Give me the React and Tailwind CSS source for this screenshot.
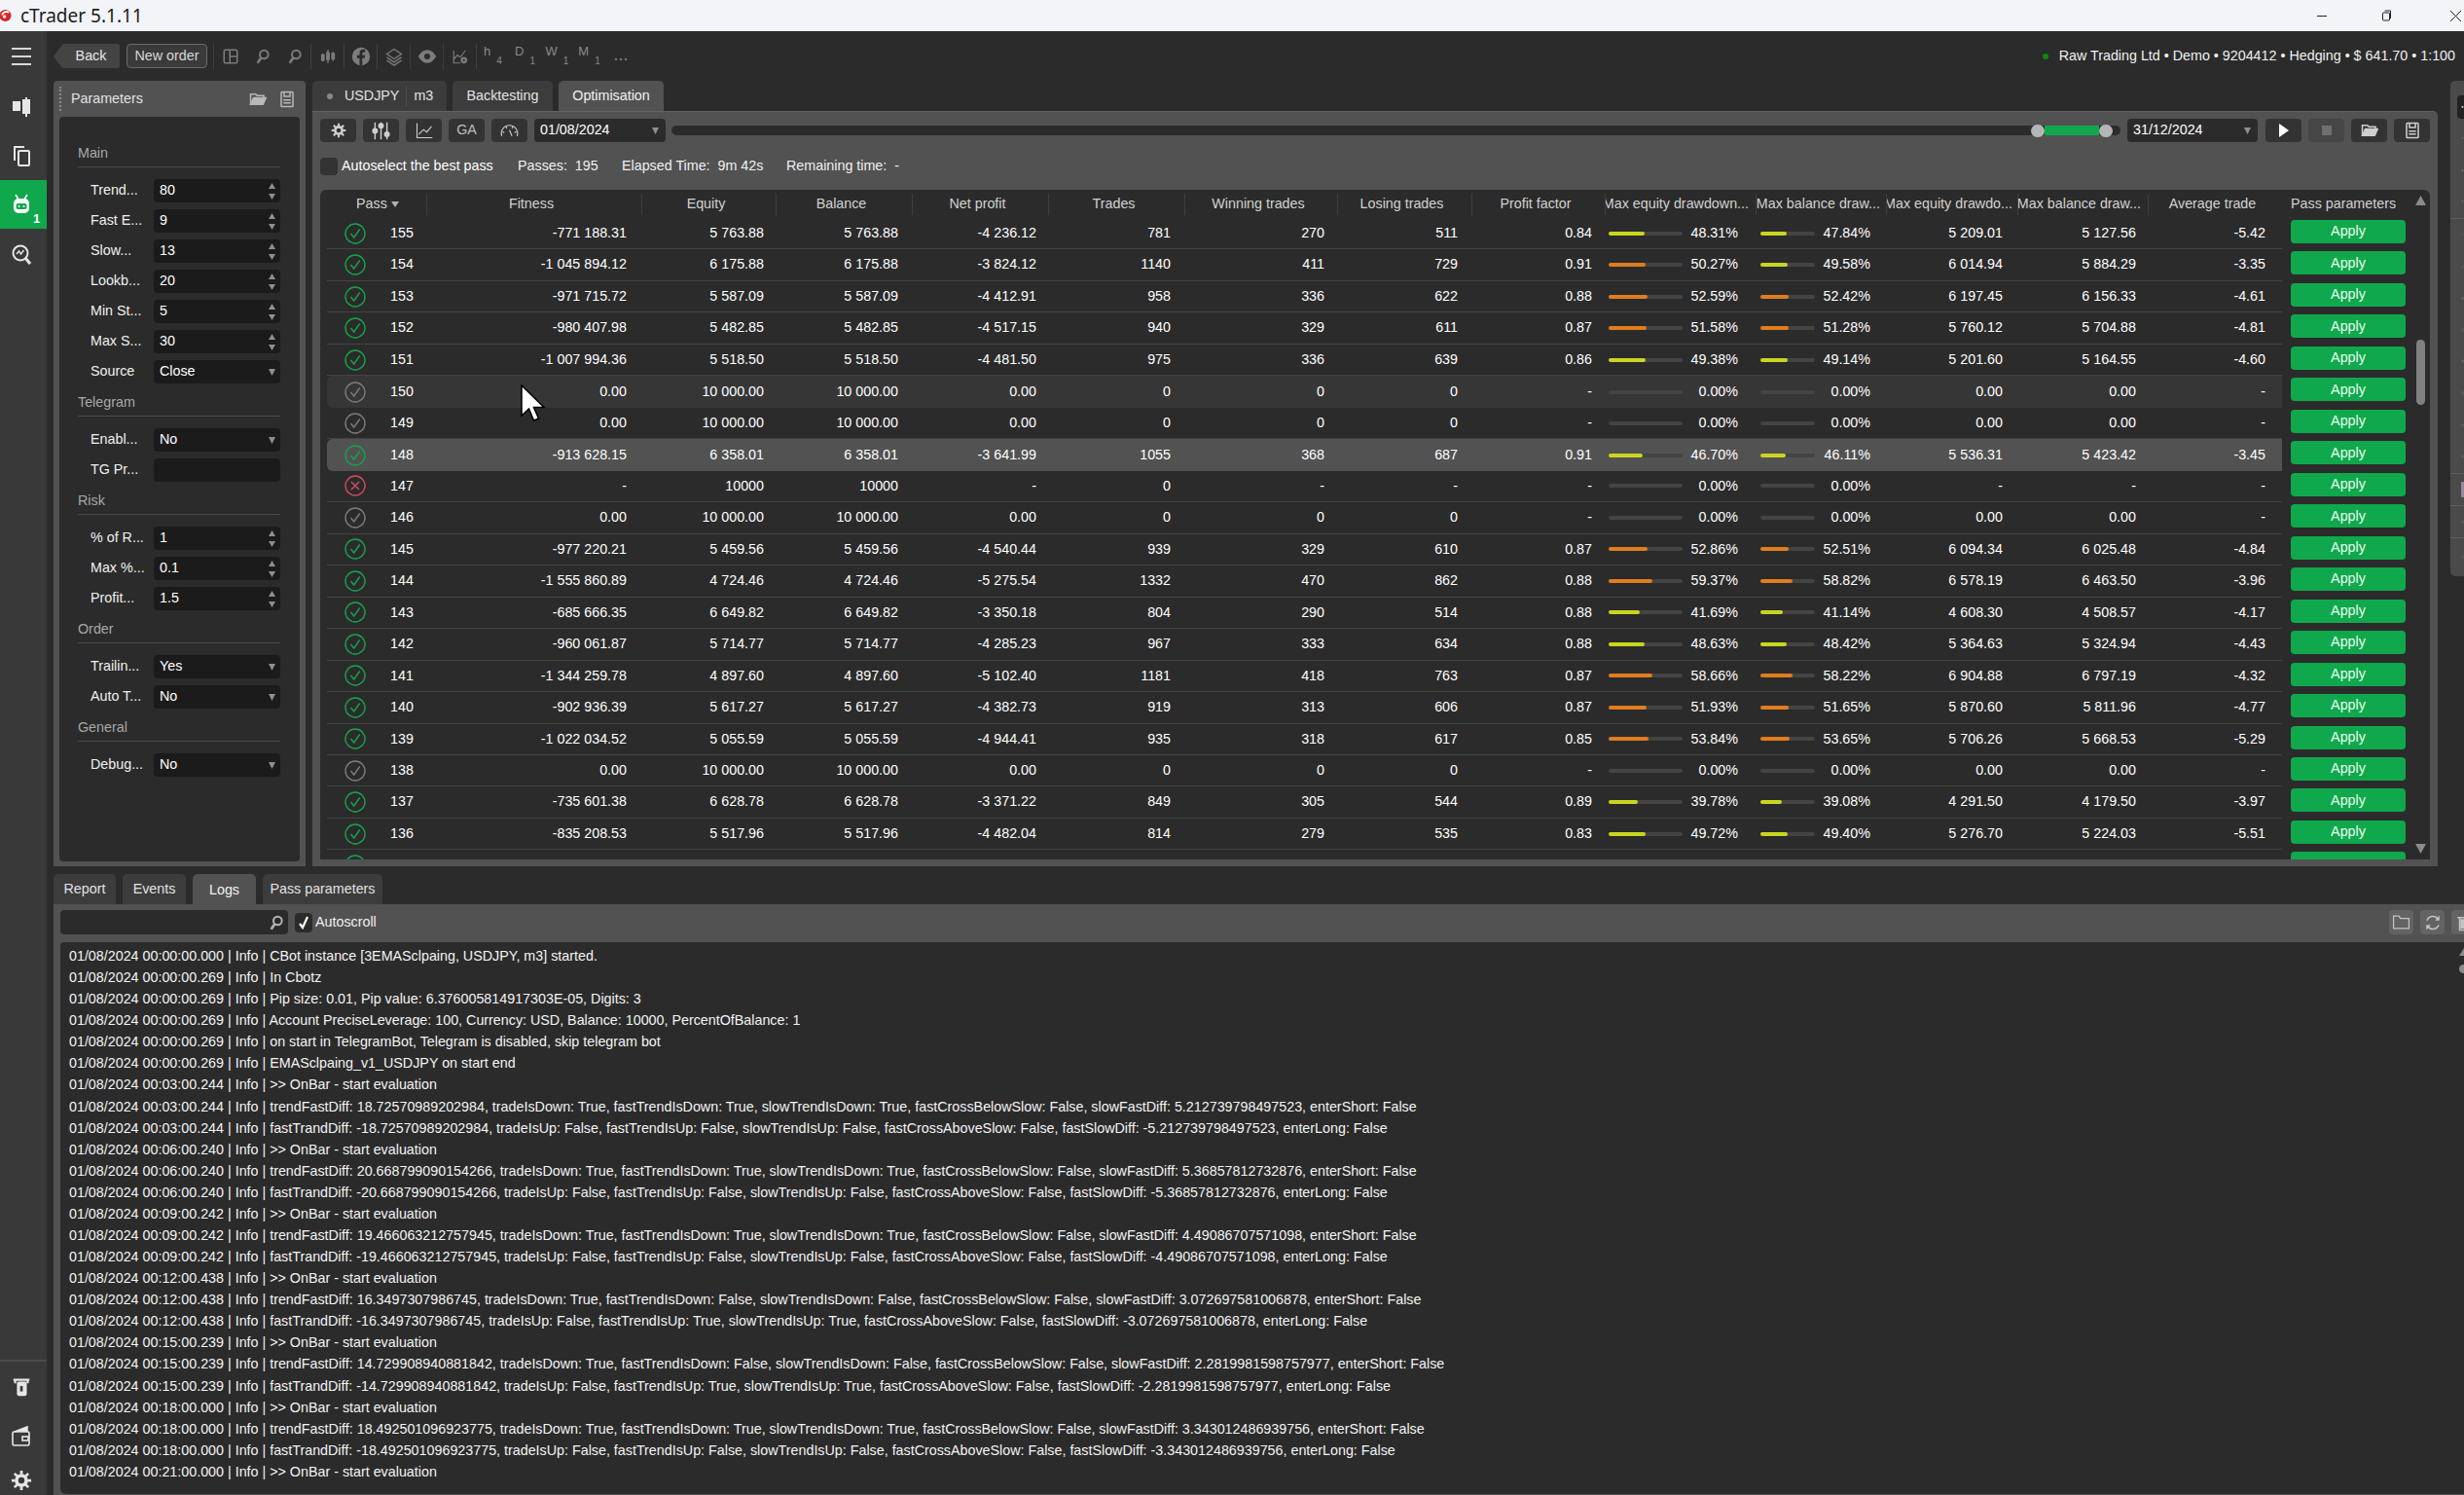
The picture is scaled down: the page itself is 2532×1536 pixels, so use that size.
import React from "react";
import { Plus, Minus, Brush, Home, PenLine, Grip, Square, Circle, Type, Camera, Bell, MousePointer2 } from "lucide-react";

// one row per pass: fitness, equity, net profit, trades, wins, losses, pf, eq dd, bal dd, eq dd $, bal dd $, avg
const doneRows = {
  155: ["-771 188.31", "5 763.88", "-4 236.12", "781", "270", "511", "0.84", 48.31, 47.84, "5 209.01", "5 127.56", "-5.42"],
  154: ["-1 045 894.12", "6 175.88", "-3 824.12", "1140", "411", "729", "0.91", 50.27, 49.58, "6 014.94", "5 884.29", "-3.35"],
  153: ["-971 715.72", "5 587.09", "-4 412.91", "958", "336", "622", "0.88", 52.59, 52.42, "6 197.45", "6 156.33", "-4.61"],
  152: ["-980 407.98", "5 482.85", "-4 517.15", "940", "329", "611", "0.87", 51.58, 51.28, "5 760.12", "5 704.88", "-4.81"],
  151: ["-1 007 994.36", "5 518.50", "-4 481.50", "975", "336", "639", "0.86", 49.38, 49.14, "5 201.60", "5 164.55", "-4.60"],
  148: ["-913 628.15", "6 358.01", "-3 641.99", "1055", "368", "687", "0.91", 46.7, 46.11, "5 536.31", "5 423.42", "-3.45"],
  145: ["-977 220.21", "5 459.56", "-4 540.44", "939", "329", "610", "0.87", 52.86, 52.51, "6 094.34", "6 025.48", "-4.84"],
  144: ["-1 555 860.89", "4 724.46", "-5 275.54", "1332", "470", "862", "0.88", 59.37, 58.82, "6 578.19", "6 463.50", "-3.96"],
  143: ["-685 666.35", "6 649.82", "-3 350.18", "804", "290", "514", "0.88", 41.69, 41.14, "4 608.30", "4 508.57", "-4.17"],
  142: ["-960 061.87", "5 714.77", "-4 285.23", "967", "333", "634", "0.88", 48.63, 48.42, "5 364.63", "5 324.94", "-4.43"],
  141: ["-1 344 259.78", "4 897.60", "-5 102.40", "1181", "418", "763", "0.87", 58.66, 58.22, "6 904.88", "6 797.19", "-4.32"],
  140: ["-902 936.39", "5 617.27", "-4 382.73", "919", "313", "606", "0.87", 51.93, 51.65, "5 870.60", "5 811.96", "-4.77"],
  139: ["-1 022 034.52", "5 055.59", "-4 944.41", "935", "318", "617", "0.85", 53.84, 53.65, "5 706.26", "5 668.53", "-5.29"],
  137: ["-735 601.38", "6 628.78", "-3 371.22", "849", "305", "544", "0.89", 39.78, 39.08, "4 291.50", "4 179.50", "-3.97"],
  136: ["-835 208.53", "5 517.96", "-4 482.04", "814", "279", "535", "0.83", 49.72, 49.4, "5 276.70", "5 224.03", "-5.51"],
};

const passes = [155, 154, 153, 152, 151, 150, 149, 148, 147, 146, 145, 144, 143, 142, 141, 140, 139, 138, 137, 136];

const zeroRow = ["0.00", "10 000.00", "0.00", "0", "0", "0", "-", 0, 0, "0.00", "0.00", "-"];
const failedRow = ["-", "10000", "-", "0", "-", "-", "-", 0, 0, "-", "-", "-"];

function rowFor(pass) {
  if (pass === 147) return failedRow;
  return doneRows[pass] || zeroRow;
}

const mainParams = [["Trend...", "80"], ["Fast E...", "9"], ["Slow...", "13"], ["Lookb...", "20"], ["Min St...", "5"], ["Max S...", "30"], ["Source", "Close", "select"]];
const telegramParams = [["Enabl...", "No", "select"], ["TG Pr...", "", "text"]];
const riskParams = [["% of R...", "1"], ["Max %...", "0.1"], ["Profit...", "1.5"]];
const orderParams = [["Trailin...", "Yes", "select"], ["Auto T...", "No", "select"]];
const generalParams = [["Debug...", "No", "select"]];

const evalLine = ">> OnBar - start evaluation";

function evalGroup(time, diff, fd, sd, sdiff) {
  // fd / sd: direction flags of fast and slow trend in the short evaluation
  return [
    [time, evalLine],
    [time, `trendFastDiff: ${diff}, tradeIsDown: True, fastTrendIsDown: ${fd}, slowTrendIsDown: ${sd}, fastCrossBelowSlow: False, slowFastDiff: ${sdiff}, enterShort: False`],
    [time, `fastTrandDiff: -${diff}, tradeIsUp: False, fastTrendIsUp: ${fd === "True" ? "False" : "True"}, slowTrendIsUp: ${sd === "True" ? "False" : "True"}, fastCrossAboveSlow: False, fastSlowDiff: -${sdiff}, enterLong: False`],
  ];
}

const logs = [
  ["00:00:00.000", "CBot instance [3EMASclpaing, USDJPY, m3] started."],
  ["00:00:00.269", "In Cbotz"],
  ["00:00:00.269", "Pip size: 0.01, Pip value: 6.376005814917303E-05, Digits: 3"],
  ["00:00:00.269", "Account PreciseLeverage: 100, Currency: USD, Balance: 10000, PercentOfBalance: 1"],
  ["00:00:00.269", "on start in TelegramBot, Telegram is disabled, skip telegram bot"],
  ["00:00:00.269", "EMASclpaing_v1_USDJPY on start end"],
  ...evalGroup("00:03:00.244", "18.72570989202984", "True", "True", "5.212739798497523"),
  ...evalGroup("00:06:00.240", "20.668799090154266", "True", "True", "5.36857812732876"),
  ...evalGroup("00:09:00.242", "19.466063212757945", "True", "True", "4.49086707571098"),
  ...evalGroup("00:12:00.438", "16.3497307986745", "False", "False", "3.072697581006878"),
  ...evalGroup("00:15:00.239", "14.729908940881842", "False", "False", "2.2819981598757977"),
  ...evalGroup("00:18:00.000", "18.492501096923775", "True", "True", "3.343012486939756"),
  ["00:21:00.000", evalLine],
];

/* ---- small drawings ---- */

function Svg({ size = 18, children, className = "", strokeWidth = "2" }) {
  return (
    <svg width={size} height={size} viewBox="0 0 24 24" fill="none" stroke="currentColor" strokeWidth={strokeWidth} className={className}>
      {children}
    </svg>
  );
}

const GearIcon = ({ size = 18 }) => (
  <Svg size={size}>
    <circle cx="12" cy="12" r="5.5" strokeWidth="4" />
    <path d="M12 1v4M12 19v4M1 12h4M19 12h4M4.2 4.2l3 3M16.8 16.8l3 3M4.2 19.8l3-3M16.8 7.2l3-3" strokeWidth="3" />
  </Svg>
);

const SaveIcon = ({ size = 18 }) => (
  <Svg size={size}>
    <rect x="4" y="2" width="16" height="20" rx="1" />
    <path d="M8 2v6h8V2M7 13h10M7 17h10" />
  </Svg>
);

const OpenIcon = ({ size = 18 }) => (
  <Svg size={size}>
    <path d="M2 19V5h7l2 2h9v3" />
    <path d="M2 19l4-9h17l-4 9z" fill="currentColor" />
  </Svg>
);

const SearchGlass = ({ size = 16 }) => (
  <Svg size={size} strokeWidth="3">
    <circle cx="14" cy="9" r="6.5" />
    <path d="M9.5 14L4 22" strokeWidth="4" />
  </Svg>
);

function StatusIcon({ status }) {
  const color = status === "done" ? "text-[#16a34a]" : status === "failed" ? "text-[#cf4a62]" : "text-[#7c7c7c]";
  return (
    <svg width="22" height="22" viewBox="0 0 22 22" fill="none" stroke="currentColor" className={color}>
      <circle cx="11" cy="11" r="10" strokeWidth="1.4" />
      {status === "failed" ? <path d="M7 7l8 8M15 7l-8 8" strokeWidth="1.6" /> : <path d="M6.5 11l3.2 4 6-8.5" strokeWidth="1.4" />}
    </svg>
  );
}

function Triangle({ dir = "down", w = 8, h = 6, className = "" }) {
  return (
    <svg width={w} height={h} viewBox="0 0 8 6" preserveAspectRatio="none" className={className}>
      <path d={dir === "down" ? "M0 0h8L4 6z" : "M4 0l4 6H0z"} fill="currentColor" />
    </svg>
  );
}

/* ---- parameters ---- */

function ParamRow({ label, value, kind }) {
  return (
    <div className="flex items-center h-[24px] pl-[13px]">
      <div className="w-[65px] text-[#f0f0f0] whitespace-nowrap">{label}</div>
      <div className="flex-1 h-[24px] bg-[#1b1b1b] rounded-[4px] flex items-center pl-[6px] pr-[5px] text-white">
        <span className="flex-1">{value}</span>
        {kind === "select" && <Triangle className="text-[#8f8f8f]" w={7} h={7} />}
        {!kind && (
          <span className="flex flex-col gap-[5px] text-[#8f8f8f]">
            <Triangle dir="up" w={7} h={6} />
            <Triangle w={7} h={6} />
          </span>
        )}
      </div>
    </div>
  );
}

function ParamSection({ title, items }) {
  return (
    <div>
      <div className="h-[34px] flex items-end pb-[3px] border-b border-[#4a4a4a] text-[#a8a8a8]">{title}</div>
      <div className="flex flex-col gap-[7px] mt-[12px]">
        {items.map((p) => (
          <ParamRow key={p[0]} label={p[0]} value={p[1]} kind={p[2]} />
        ))}
      </div>
    </div>
  );
}

/* ---- results table ---- */

const cellGrid = "grid grid-cols-[103px_221px_138px_140px_140px_140px_157px_138px_137px_155px_134px_135px_134px_137px] items-center";

function Head({ children, className = "" }) {
  return (
    <div className={`h-[22px] flex items-center overflow-hidden whitespace-nowrap border-r border-[#3e3e3e] text-[#d2d2d2] ${className}`}>
      {children}
    </div>
  );
}

function DrawdownCell({ value, trackWidth, className }) {
  const fill = value >= 50 ? "bg-[#e07d1e]" : "bg-[#c9d61f]";
  return (
    <div className={`flex items-center justify-between ${className}`}>
      <div className="h-[4px] rounded-full bg-[#444444]" style={{ width: trackWidth }}>
        <div className={`h-[4px] rounded-full ${fill}`} style={{ width: `${value}%` }} />
      </div>
      <span>{value.toFixed(2)}%</span>
    </div>
  );
}

function ResultRow({ pass }) {
  const r = rowFor(pass);
  const status = pass === 147 ? "failed" : doneRows[pass] ? "done" : "idle";
  const highlight = pass === 148 ? "bg-[#525252] rounded-l-[6px]" : pass === 150 ? "bg-[#363636] rounded-l-[6px]" : "border-b border-[#444444]";
  return (
    <div className="flex h-[32.47px] shrink-0">
      <div className={`${cellGrid} ml-[7px] w-[2009px] text-white text-right ${highlight}`}>
        <div className="flex items-center text-left pl-[18px]">
          <StatusIcon status={status} />
          <span className="ml-[25px]">{pass}</span>
        </div>
        <div className="pr-[16px]">{r[0]}</div>
        <div className="pr-[13px]">{r[1]}</div>
        <div className="pr-[15px]">{r[1]}</div>
        <div className="pr-[13px]">{r[2]}</div>
        <div className="pr-[15px]">{r[3]}</div>
        <div className="pr-[14px]">{r[4]}</div>
        <div className="pr-[15px]">{r[5]}</div>
        <div className="pr-[14px]">{r[6]}</div>
        <DrawdownCell value={r[7]} trackWidth={76} className="pl-[3px] pr-[19px]" />
        <DrawdownCell value={r[8]} trackWidth={56} className="pl-[4px] pr-[17px]" />
        <div className="pr-[16px]">{r[9]}</div>
        <div className="pr-[13px]">{r[10]}</div>
        <div className="pr-[17px]">{r[11]}</div>
      </div>
      <div className="ml-[9px] pt-[2px]">
        <button className="w-[118px] h-[24px] rounded-[4px] bg-[#10a84c] text-[#eafff0]">Apply</button>
      </div>
    </div>
  );
}

function ResultsTable() {
  return (
    <div className="h-[688px] bg-[#2b2b2b] rounded-t-[6px] flex overflow-hidden">
      <div className="flex-1 flex flex-col min-w-0">
        <div className="h-[29px] shrink-0 flex items-center">
          <div className={`${cellGrid} ml-[7px] w-[2009px]`}>
            <Head className="pl-[30px] gap-[4px]">
              Pass <Triangle className="text-[#b0b0b0]" w={8} h={6} />
            </Head>
            <Head className="justify-center pr-[6px]">Fitness</Head>
            <Head className="justify-center pr-[6px]">Equity</Head>
            <Head className="justify-center pr-[6px]">Balance</Head>
            <Head className="justify-center pr-[6px]">Net profit</Head>
            <Head className="justify-center pr-[6px]">Trades</Head>
            <Head className="justify-center pr-[6px]">Winning trades</Head>
            <Head className="justify-center pr-[6px]">Losing trades</Head>
            <Head className="justify-center pr-[6px]">Profit factor</Head>
            <Head className="justify-end pr-[7px]">Max equity drawdown...</Head>
            <Head className="justify-end pr-[6px]">Max balance draw...</Head>
            <Head className="justify-end pr-[5px]">Max equity drawdo...</Head>
            <Head className="justify-end pr-[7px]">Max balance draw...</Head>
            <Head className="justify-center pr-[6px] border-r-0">Average trade</Head>
          </div>
          <div className="ml-[9px] text-[#d2d2d2] whitespace-nowrap">Pass parameters</div>
        </div>
        {passes.map((p) => (
          <ResultRow key={p} pass={p} />
        ))}
        <div className="flex h-[32.47px] shrink-0">
          <div className="w-[2009px] ml-[7px] pl-[18px] pt-[5px]">
            <StatusIcon status="done" />
          </div>
          <div className="ml-[9px] pt-[2px]">
            <div className="w-[118px] h-[24px] rounded-[4px] bg-[#10a84c]" />
          </div>
        </div>
      </div>
      <div className="w-[19px] shrink-0 flex flex-col items-center pt-[6px] pb-[6px] text-[#8a8a8a]">
        <Triangle dir="up" w={11} h={10} />
        <div className="w-[9px] h-[67px] rounded-full bg-[#808080] mt-[138px]" />
        <Triangle className="mt-auto" w={11} h={10} />
      </div>
    </div>
  );
}

/* ---- bars ---- */

const ToolButton = ({ children, className = "bg-[#333333]" }) => (
  <button className={`w-[37px] h-[24px] rounded-[4px] flex items-center justify-center text-[#cfcfcf] shrink-0 ${className}`}>{children}</button>
);

const Sep = () => <div className="w-px h-[26px] bg-[#3f3f3f] shrink-0" />;

const Slot = ({ children }) => <div className="w-[33px] flex items-center justify-center text-[#7c7c7c] shrink-0">{children}</div>;

const Frame = ({ a, b }) => (
  <div className="w-[33px] h-[26px] flex justify-center gap-[6px] text-[#8a8a8a] shrink-0 text-[13px] leading-[15px]">
    <span>{a}</span>
    <span className="text-[10px] mt-[12px] leading-[12px]">{b}</span>
  </div>
);

function TopToolbar() {
  return (
    <div className="h-[51px] shrink-0 flex items-center">
      <div className="flex items-center">
        <div className="w-0 h-0 border-y-[12.5px] border-y-transparent border-r-[9px] border-r-[#444444]" />
        <button className="w-[59px] h-[25px] bg-[#444444] rounded-r-[3px] text-[#e8e8e8]">Back</button>
      </div>
      <button className="w-[83px] h-[25px] ml-[7px] rounded-[4px] border border-[#6a6a6a] bg-[#3a3a3a] text-[#d8d8d8]">New order</button>
      <div className="ml-[6px]"><Sep /></div>
      <Slot>
        <Svg><rect x="3" y="3" width="18" height="18" rx="2" /><path d="M11 3v18M11 12h10" /></Svg>
      </Slot>
      <Slot><SearchGlass /></Slot>
      <Slot><SearchGlass /></Slot>
      <Sep />
      <Slot>
        <Svg><path d="M5 8v11M12 3v18M19 6v12" /><rect x="3.5" y="10" width="3" height="7" fill="currentColor" /><rect x="10.5" y="7" width="3" height="9" fill="currentColor" /><rect x="17.5" y="8" width="3" height="7" fill="currentColor" /></Svg>
      </Slot>
      <Sep />
      <Slot>
        <svg width="20" height="20" viewBox="0 0 24 24"><circle cx="12" cy="12" r="11" fill="currentColor" /><path d="M13.5 23V14h3l.5-3.5h-3.5V8.5c0-1 .4-1.7 1.8-1.7H17V3.6C16.6 3.5 15.6 3.4 14.5 3.4 12 3.4 10.2 5 10.2 7.9v2.6H7V14h3.2v9z" fill="#2b2b2b" /></svg>
      </Slot>
      <Sep />
      <Slot>
        <Svg size={20} strokeWidth="1.6"><path d="M12 3l9 6-9 6-9-6zM3 13l9 6 9-6M3 17l9 6 9-6" /></Svg>
      </Slot>
      <Sep />
      <Slot>
        <Svg><path d="M1 12c3-5 7-8 11-8s8 3 11 8c-3 5-7 8-11 8S4 17 1 12z" fill="currentColor" /><circle cx="12" cy="12" r="4" fill="#2b2b2b" stroke="none" /></Svg>
      </Slot>
      <Sep />
      <Slot>
        <Svg><path d="M3 4v17h9M3 16l5-6 4 3 7-9" strokeWidth="1.6" /><circle cx="17" cy="17" r="3" strokeWidth="3" /></Svg>
      </Slot>
      <Sep />
      <Frame a="h" b="4" />
      <Frame a="D" b="1" />
      <Frame a="W" b="1" />
      <Frame a="M" b="1" />
      <div className="w-[33px] text-center text-[#7a7a7a] font-bold tracking-[1px] shrink-0">...</div>
      <div className="ml-auto flex items-center gap-[11px] pr-[9px] text-[#f0f0f0] whitespace-nowrap">
        <span className="w-[6px] h-[6px] rounded-full bg-[#0b8a12]" />
        <span>Raw Trading Ltd • Demo • 9204412 • Hedging • $ 641.70 • 1:100</span>
      </div>
    </div>
  );
}

function Sidebar() {
  const item = "flex items-center justify-center pr-[4px]";
  return (
    <div className="w-[48px] shrink-0 bg-[#393939] flex flex-col text-[#e6e6e6]">
      <div className={`h-[51px] ${item}`}>
        <div className="w-[20px] flex flex-col gap-[6px]">
          <div className="h-[2px] bg-[#d8d8d8]" />
          <div className="h-[2px] bg-[#d8d8d8]" />
          <div className="h-[2px] bg-[#d8d8d8]" />
        </div>
      </div>
      <div className={`h-[51px] ${item}`}>
        <Svg size={24}>
          <path d="M7 7v10M17 3v20" />
          <rect x="4" y="8" width="6" height="8" fill="currentColor" />
          <rect x="14" y="6" width="6" height="13" fill="currentColor" />
        </Svg>
      </div>
      <div className={`h-[51px] ${item}`}>
        <Svg size={24}>
          <path d="M5 17V3h10" />
          <rect x="9" y="7" width="11" height="15" rx="1" />
        </Svg>
      </div>
      <div className={`h-[50px] bg-[#10a84c] relative ${item}`}>
        <svg width="22" height="24" viewBox="0 0 22 24" fill="none">
          <path d="M5 2l2.5 4M17 2l-2.5 4" stroke="#fff" strokeWidth="1.6" />
          <rect x="3" y="6" width="16" height="15" rx="5" fill="#fff" />
          <rect x="5.5" y="11" width="11" height="6" rx="2" fill="#10a84c" />
          <circle cx="8.5" cy="14" r="1" fill="#fff" />
          <circle cx="13.5" cy="14" r="1" fill="#fff" />
        </svg>
        <span className="absolute left-[34px] top-[30px] text-white font-bold text-[13px]">1</span>
      </div>
      <div className={`h-[51px] ${item}`}>
        <Svg size={24}>
          <circle cx="11" cy="11" r="7.5" />
          <path d="M16 16l5 6" strokeWidth="3" />
          <path d="M7 12l2.5-3 2 3 3-4" strokeWidth="1.4" />
        </Svg>
      </div>
      <div className="mt-auto border-t-2 border-[#4c4c4c]">
        <div className={`h-[51px] ${item}`}>
          <Svg size={22}>
            <path d="M3 4h18M5 4v4M19 4v4" strokeWidth="2.4" />
            <rect x="8" y="7" width="9" height="14" rx="1" fill="currentColor" />
            <rect x="10.5" y="11" width="3" height="6" fill="#393939" stroke="none" />
          </Svg>
        </div>
        <div className={`h-[50px] ${item}`}>
          <Svg size={24} strokeWidth="1.6">
            <rect x="3" y="8" width="17" height="14" rx="1.5" />
            <path d="M5 8l13-5v5" fill="currentColor" />
            <rect x="13" y="13" width="6" height="4" />
          </Svg>
        </div>
        <div className="h-[36px] pt-[10px] pr-[4px] flex justify-center">
          <GearIcon size={22} />
        </div>
      </div>
    </div>
  );
}

function ParametersPanel() {
  return (
    <div className="w-[259px] shrink-0 bg-[#525252] rounded-t-[4px] flex flex-col">
      <div className="h-[37px] shrink-0 flex items-center pl-[6px] pr-[10px] text-[#e2e2e2]">
        <div className="w-[2px] h-[25px] border-l-2 border-dotted border-[#8c8c8c]" />
        <span className="ml-[10px] flex-1">Parameters</span>
        <span className="text-[#b8b8b8] flex items-center gap-[12px]">
          <OpenIcon />
          <SaveIcon />
        </span>
      </div>
      <div className="flex-1 mx-[6px] mb-[5px] bg-[#2b2b2b] rounded-[4px] pt-[18px] pl-[19px] pr-[20px]">
        <ParamSection title="Main" items={mainParams} />
        <ParamSection title="Telegram" items={telegramParams} />
        <ParamSection title="Risk" items={riskParams} />
        <ParamSection title="Order" items={orderParams} />
        <ParamSection title="General" items={generalParams} />
      </div>
    </div>
  );
}

function OptimisationPanel() {
  return (
    <div className="w-[2184px] shrink-0 flex flex-col">
      <div className="h-[31px] flex gap-[6px] text-[#e2e2e2]">
        <div className="w-[138px] bg-[#3c3c3c] rounded-t-[5px] flex items-center pl-[15px]">
          <span className="w-[6px] h-[6px] rounded-full bg-[#8a8a8a]" />
          <span className="ml-[12px]">USDJPY</span>
          <span className="w-px h-[22px] bg-[#4e4e4e] mx-[7px]" />
          <span>m3</span>
        </div>
        <div className="w-[103px] bg-[#3c3c3c] rounded-t-[5px] flex items-center justify-center">Backtesting</div>
        <div className="w-[108px] bg-[#525252] rounded-t-[5px] flex items-center justify-center text-[#f2f2f2]">Optimisation</div>
      </div>
      <div className="flex-1 bg-[#525252] border-t border-[#626262] rounded-tr-[5px] px-[8px] flex flex-col min-h-0">
        <div className="flex items-center h-[31px] pt-[7px] shrink-0">
          <div className="flex gap-[7px]">
            <ToolButton><GearIcon size={16} /></ToolButton>
            <ToolButton>
              <Svg size={21} strokeWidth="1.6">
                <path d="M5 2v20M12 2v20M19 2v20" />
                <circle cx="5" cy="12" r="2.6" fill="currentColor" />
                <circle cx="12" cy="6" r="2.6" fill="currentColor" />
                <circle cx="19" cy="16" r="2.6" fill="currentColor" />
              </Svg>
            </ToolButton>
            <ToolButton>
              <Svg size={20} strokeWidth="1.3">
                <path d="M3 3v18h19M5 17l6-6 4 3 6-7" />
              </Svg>
            </ToolButton>
            <ToolButton><span className="text-[#bdbdbd]">GA</span></ToolButton>
            <ToolButton>
              <Svg size={21} strokeWidth="1.3">
                <path d="M3 18a9.5 9.5 0 1 1 18 0M12 11l3 7M4 13l2 1M8 7l1 2M16 7l-1 2M20 13l-2 1" />
              </Svg>
            </ToolButton>
          </div>
          <div className="w-[135px] h-[24px] ml-[7px] bg-[#2b2b2b] rounded-[4px] flex items-center pl-[6px] pr-[7px] text-white shrink-0">
            <span className="flex-1">01/08/2024</span>
            <Triangle className="text-[#8f8f8f]" w={7} h={7} />
          </div>
          <div className="flex-1 h-[10px] ml-[6px] rounded-full bg-[#2b2b2b] flex items-center justify-end pr-[8px]">
            <div className="w-[14px] h-[13px] rounded-full bg-[#b5b5b5]" />
            <div className="w-[56px] h-[10px] bg-[#10a84c]" />
            <div className="w-[14px] h-[13px] rounded-full bg-[#b5b5b5]" />
          </div>
          <div className="w-[134px] h-[24px] ml-[7px] bg-[#2b2b2b] rounded-[4px] flex items-center pl-[6px] pr-[7px] text-white shrink-0">
            <span className="flex-1">31/12/2024</span>
            <Triangle className="text-[#8f8f8f]" w={7} h={7} />
          </div>
          <div className="flex gap-[7px] ml-[8px]">
            <ToolButton>
              <svg width="12" height="14" viewBox="0 0 12 14"><path d="M1 0l10 7-10 7z" fill="#fff" /></svg>
            </ToolButton>
            <ToolButton className="bg-[#464646]">
              <div className="w-[10px] h-[10px] bg-[#6f6f6f]" />
            </ToolButton>
            <ToolButton><OpenIcon /></ToolButton>
            <ToolButton><SaveIcon /></ToolButton>
          </div>
        </div>
        <div className="h-[49px] shrink-0 flex items-center text-[#f0f0f0] whitespace-nowrap">
          <div className="w-[18px] h-[18px] bg-[#333333] rounded-[4px] mr-[4px]" />
          <div className="w-[181px] text-white">Autoselect the best pass</div>
          <div className="w-[107px]">Passes:&nbsp; 195</div>
          <div className="w-[169px]">Elapsed Time:&nbsp; 9m 42s</div>
          <div>Remaining time:&nbsp; -</div>
        </div>
        <ResultsTable />
      </div>
    </div>
  );
}

function DrawingTools() {
  const slot = "h-[32.6px] flex items-center pl-[11px] text-[#8c8c8c] shrink-0";
  const line = "h-px bg-[#5e5e5e] shrink-0";
  return (
    <div className="flex-1 h-[509px] ml-[6px] bg-[#4a4a4a] rounded-l-[5px] overflow-hidden pt-[15px] pb-[4px] flex flex-col">
      <div className="h-[24px] ml-[7px] bg-[#222222] rounded-l-[4px] flex items-center pl-[4px] shrink-0 mb-[4px]">
        <MousePointer2 size={20} className="text-white" fill="#fff" />
      </div>
      <div className={slot}><Plus size={24} /></div>
      <div className={slot}><Plus size={24} strokeWidth={3} /></div>
      <div className={slot}><Plus size={24} /></div>
      <div className={line} />
      <div className={slot}><Minus size={24} /></div>
      <div className={slot}><Brush size={24} /></div>
      <div className={slot}><Home size={24} /></div>
      <div className={slot}><PenLine size={24} /></div>
      <div className={slot}><Grip size={24} /></div>
      <div className={slot}><Square size={24} /></div>
      <div className={slot}><Circle size={24} /></div>
      <div className={slot}><Type size={24} /></div>
      <div className={line} />
      <div className="h-[32px] flex items-center pl-[11px] shrink-0">
        <div className="w-[24px] h-[16px] bg-[#a981c9] border border-[#8c8c8c]" />
      </div>
      <div className={line} />
      <div className={slot}><Camera size={24} /></div>
      <div className={line} />
      <div className="h-[38px] flex items-center pl-[11px] text-[#8c8c8c] shrink-0"><Bell size={24} /></div>
    </div>
  );
}

function LogsArea() {
  const tab = "h-[31px] bg-[#3c3c3c] rounded-t-[5px] flex items-center justify-center text-[#e2e2e2]";
  return (
    <div className="flex-1 flex flex-col min-h-0">
      <div className="h-[31px] shrink-0 flex gap-[7px]">
        <div className={`${tab} w-[64px]`}>Report</div>
        <div className={`${tab} w-[65px]`}>Events</div>
        <div className="w-[65px] h-[31px] bg-[#525252] rounded-t-[5px] flex items-center justify-center text-[#f2f2f2] pt-[2px]">Logs</div>
        <div className={`${tab} w-[123px]`}>Pass parameters</div>
      </div>
      <div className="flex-1 bg-[#525252] flex flex-col min-h-0">
        <div className="h-[39px] shrink-0 flex items-center pl-[7px] pb-[2px]">
          <div className="w-[234px] h-[25px] bg-[#2b2b2b] rounded-[4px] flex items-center justify-end pr-[4px] text-[#b5b5b5]">
            <SearchGlass />
          </div>
          <div className="w-[18px] h-[20px] ml-[7px] bg-[#2b2b2b] rounded-[4px] flex items-center justify-center">
            <svg width="12" height="14" viewBox="0 0 12 14" fill="none"><path d="M2 8l3 4 5-11" stroke="#fff" strokeWidth="2.2" /></svg>
          </div>
          <span className="ml-[3px] text-[#f0f0f0]">Autoscroll</span>
          <div className="ml-auto -mr-[12px] flex gap-[7px] text-[#c4c4c4]">
            <button className="w-[25px] h-[25px] bg-[#636363] rounded-[4px] flex items-center justify-center">
              <Svg size={19} strokeWidth="1.6"><path d="M2 20V4h7l2 3h11v13z" /></Svg>
            </button>
            <button className="w-[25px] h-[25px] bg-[#636363] rounded-[4px] flex items-center justify-center">
              <Svg size={18}><path d="M4 9a8.5 8.5 0 0 1 15-2M20 15a8.5 8.5 0 0 1-15 2" /><path d="M21 2v7h-6zM3 22v-7h6z" fill="currentColor" stroke="none" /></Svg>
            </button>
            <button className="w-[25px] h-[25px] bg-[#636363] rounded-[4px] flex items-center justify-center">
              <Svg size={18}><path d="M3 5h18M6 5v17h12V5" /><rect x="8" y="8" width="8" height="11" fill="currentColor" /></Svg>
            </button>
          </div>
        </div>
        <div className="flex-1 ml-[7px] mb-[1px] bg-[#2b2b2b] rounded-tl-[4px] rounded-bl-[6px] flex min-h-0 overflow-hidden">
          <div className="flex-1 pt-[3px] pl-[9px] text-[#f4f4f4] leading-[22.08px] whitespace-nowrap">
            {logs.map((l, i) => (
              <div key={i}>01/08/2024 {l[0]} | Info | {l[1]}</div>
            ))}
          </div>
          <div className="w-[5px] shrink-0 overflow-hidden pt-[6px] text-[#8a8a8a]">
            <Triangle dir="up" w={10} h={8} />
            <div className="w-[10px] h-[9px] rounded-full bg-[#8a8a8a] mt-[9px]" />
          </div>
        </div>
      </div>
    </div>
  );
}

export default function App() {
  return (
    <div className="relative w-[2532px] h-[1536px] overflow-hidden flex flex-col bg-[#2b2b2b] font-['Liberation_Sans',Arial,sans-serif] text-[14.3px]">
      <div className="h-[32px] shrink-0 bg-[#f2f4f8] flex items-center text-[#1c1c1c]">
        <svg width="15" height="16" viewBox="0 0 15 16" fill="none" className="-ml-px">
          <circle cx="6.5" cy="8" r="6" fill="#d8232a" />
          <path d="M10 5a4.4 4.4 0 0 0-7 2.4" stroke="#fff" strokeWidth="1.8" />
          <circle cx="5.5" cy="9" r="1.8" fill="#fff" />
        </svg>
        <span className="ml-[7px] font-['Noto_Sans',sans-serif] text-[19px]">cTrader 5.1.11</span>
        <div className="ml-auto flex items-center">
          <div className="w-[10px] h-px bg-[#222222] mr-[56px]" />
          <svg width="12" height="12" viewBox="0 0 12 12" fill="none" stroke="#222222" className="mr-[58px]">
            <rect x="1.5" y="3" width="7" height="8" rx="1" />
            <path d="M3.5 1h6v8" />
          </svg>
          <svg width="13" height="13" viewBox="0 0 13 13" stroke="#222222" className="mr-[2px]">
            <path d="M1 1l11 11M12 1L1 12" />
          </svg>
        </div>
      </div>
      <div className="flex-1 flex min-h-0">
        <Sidebar />
        <div className="flex-1 min-w-0 flex flex-col pl-[7px]">
          <TopToolbar />
          <div className="h-[807px] shrink-0 flex gap-[7px]">
            <ParametersPanel />
            <OptimisationPanel />
            <DrawingTools />
          </div>
          <div className="h-[8px] shrink-0" />
          <LogsArea />
        </div>
      </div>
      {/* mouse pointer caught in the screenshot */}
      <svg width="26" height="38" viewBox="0 0 26 38" className="absolute left-[535px] top-[395px]">
        <path d="M1 1v31l7.5-7 5 12 5-2-5-11.5H24z" fill="#fff" stroke="#000" strokeWidth="1.5" />
      </svg>
    </div>
  );
}
